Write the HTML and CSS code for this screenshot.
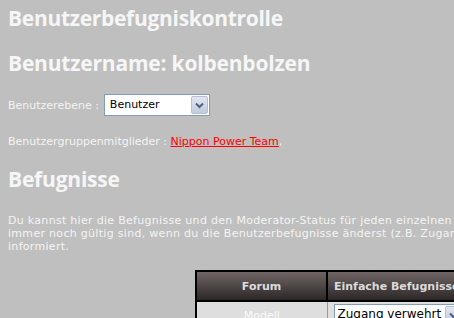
FILE: index.html
```html
<!DOCTYPE html>
<html lang="de">
<head>
    <meta charset="UTF-8">
    <title>Benutzerbefugniskontrolle</title>
    <link rel="stylesheet" href="styles.css">
</head>
<body>
    <div class="seite">
        <h1 class="titel">Benutzerbefugniskontrolle</h1>
        <h2 class="titel">Benutzername: kolbenbolzen</h2>

        <p class="feld">Benutzerebene :
            <span class="auswahl breit">
                <select>
                    <option>Benutzer</option>
                    <option>Moderator</option>
                    <option>Administrator</option>
                </select>
                <span class="pfeil"><svg width="9" height="7" viewBox="0 0 9 7"><path d="M1 1.5 L4.5 5 L8 1.5" fill="none" stroke="#4d6185" stroke-width="2"/></svg></span>
            </span>
        </p>

        <p class="gruppen">Benutzergruppenmitglieder : <a href="#">Nippon Power Team</a>,</p>

        <h2 class="titel abschnitt">Befugnisse</h2>

        <p class="hinweis">Du kannst hier die Befugnisse und den Moderator-Status für jeden einzelnen Bereich festlegen. Beachte bitte, dass die Moderator-Rechte<br>
        immer noch gültig sind, wenn du die Benutzerbefugnisse änderst (z.B. Zugang verwehrt). Der Benutzer wird darüber nicht automatisch<br>
        informiert.</p>

        <!-- Tabelle mit den Foren -->
        <table class="rechte">
            <tr>
                <th class="forum">Forum</th>
                <th>Einfache Befugnisse</th>
                <th>Moderator</th>
            </tr>
            <tr>
                <td class="forum">Modell</td>
                <td>
                    <span class="auswahl gross">
                        <select>
                            <option>Zugang verwehrt</option>
                            <option>Lesen</option>
                        </select>
                        <span class="pfeil"><svg width="9" height="7" viewBox="0 0 9 7"><path d="M1 1.5 L4.5 5 L8 1.5" fill="none" stroke="#4d6185" stroke-width="2"/></svg></span>
                    </span>
                </td>
                <td>Nein</td>
            </tr>
        </table>
    </div>
</body>
</html>
```

FILE: styles.css
```css
* {
    padding: 0;
    margin: 0;
}

body {
    background-color: #bfbfbf;
    color: #f4f4f4;
    font-family: "DejaVu Sans", Verdana, sans-serif;
    overflow: hidden;
}

.seite {
    width: 820px;
    padding: 6px 8px 8px;
}

.titel {
    font-family: "Open Sans", "Liberation Sans", sans-serif;
    font-weight: bold;
    font-size: 21px;
    line-height: 24px;
    color: #f6f6f6;
    letter-spacing: -0.3px;
}

h2.titel {
    margin-top: 21px;
    letter-spacing: -0.2px;
}

h2.abschnitt {
    margin-top: 19px;
}

.feld {
    font-size: 11px;
    margin-top: 19px;
    display: flex;
    align-items: center;
    gap: 5px;
}

.gruppen {
    font-size: 11px;
    margin-top: 19px;
}

.gruppen a {
    color: #ff0000;
}

.auswahl {
    position: relative;
    display: inline-block;
    height: 20px;
    border: 1px solid #7f9db9;
    background: #ffffff;
}

.auswahl select {
    appearance: none;
    -webkit-appearance: none;
    border: none;
    background: transparent;
    font-family: "DejaVu Sans", Verdana, sans-serif;
    font-size: 11px;
    color: #000;
    height: 18px;
    padding: 0 20px 0 5px;
    width: 100%;
    outline: none;
}

.breit {
    width: 104px;
}

.gross {
    width: 128px;
}

.gross select {
    font-size: 12px;
    padding-left: 3px;
}

.pfeil {
    position: absolute;
    right: 1px;
    top: 1px;
    width: 15px;
    height: 16px;
    background: linear-gradient(#e2e6f2, #c3cadb);
    border: 1px solid #b4bfd6;
    border-radius: 2px;
    display: flex;
    align-items: center;
    justify-content: center;
}

.hinweis {
    margin-top: 23px;
    font-size: 11px;
    line-height: 13px;
    letter-spacing: 0.3px;
    white-space: nowrap;
}

.rechte {
    margin: 17px 0 0 187px;
    border-collapse: collapse;
    border: 2px solid #000;
    font-size: 11px;
}

.rechte th {
    height: 28px;
    padding: 0 6px;
    background: linear-gradient(#706565, #2d2727);
    color: #dcdcdc;
    border: 2px solid #000;
    text-align: left;
    white-space: nowrap;
}

.rechte th.forum {
    width: 117px;
    text-align: center;
}

.rechte td {
    height: 26px;
    padding: 0 6px;
    background: #dedede;
    color: #222;
    border: 1px solid #9a9a9a;
}

.rechte td.forum {
    color: #fafafa;
    text-align: center;
}
```
